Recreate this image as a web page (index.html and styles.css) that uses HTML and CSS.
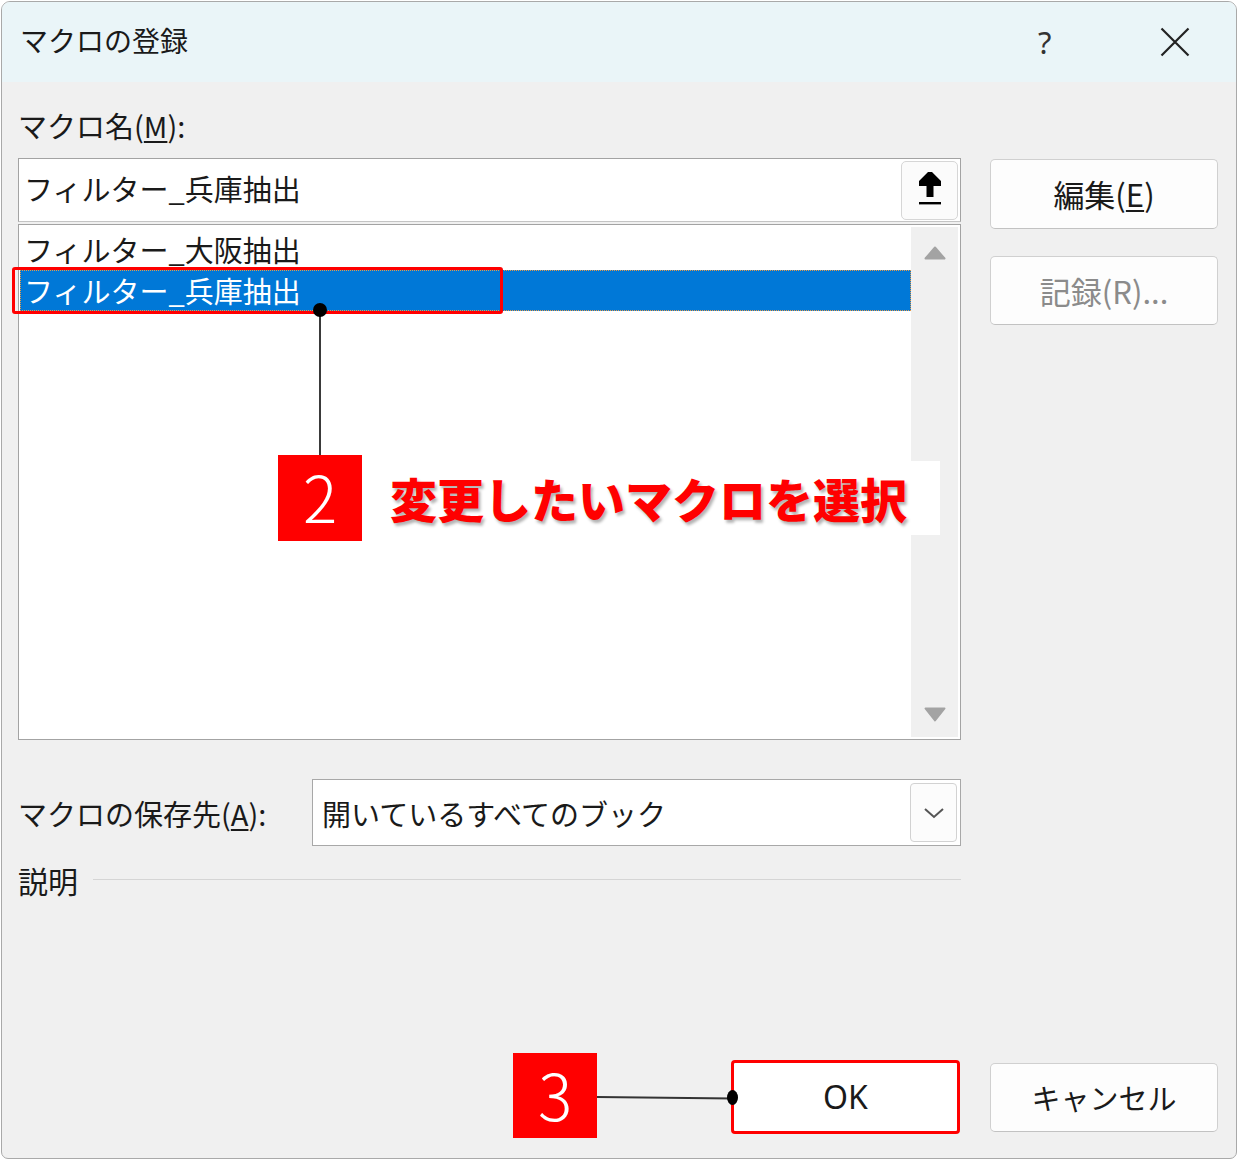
FILE: index.html
```html
<!DOCTYPE html>
<html lang="ja">
<head>
<meta charset="utf-8">
<title>マクロの登録</title>
<link rel="stylesheet" href="styles.css">
</head>
<body>
<div class="dialog">
  <div class="titlebar">
    <span class="title">マクロの登録</span>
    <span class="help">?</span>
    <svg class="close" width="30" height="30" viewBox="0 0 30 30"><path d="M1.5 1.5 L28.5 28.5 M28.5 1.5 L1.5 28.5" stroke="#222" stroke-width="2.2" fill="none"/></svg>
  </div>
  <div class="main">
    <div class="label name-label">マクロ名(<u>M</u>):</div>
    <div class="upper">
      <div class="leftcol">
        <div class="textbox">
          <span class="tb-text">フィルター_兵庫抽出</span>
          <span class="tb-btn">
            <svg width="24" height="34" viewBox="0 0 24 34"><path d="M10 1 H14 L23 10 V15 H15.5 V26 H8.5 V15 H1 V10 Z" fill="#000"/><rect x="1" y="31" width="22" height="2.4" fill="#000"/></svg>
          </span>
        </div>
        <div class="listbox">
          <div class="items">
            <div class="item">フィルター_大阪抽出</div>
            <div class="item selected">フィルター_兵庫抽出</div>
          </div>
          <div class="scrollbar">
            <svg width="22" height="14" viewBox="0 0 22 14"><path d="M11 1.5 L20.5 12.5 H1.5 Z" fill="#a3a3a3" stroke="#a3a3a3" stroke-width="2" stroke-linejoin="round"/></svg>
            <svg width="22" height="15" viewBox="0 0 22 15"><path d="M1.5 1.5 H20.5 L11 13.5 Z" fill="#a3a3a3" stroke="#a3a3a3" stroke-width="2" stroke-linejoin="round"/></svg>
          </div>
        </div>
      </div>
      <div class="rightcol">
        <div class="btn btn-edit">編集(<u>E</u>)</div>
        <div class="btn btn-record">記録(R)...</div>
      </div>
    </div>
    <div class="store-row">
      <div class="label store-label">マクロの保存先(<u>A</u>):</div>
      <div class="combo">
        <span class="combo-text">開いているすべてのブック</span>
        <span class="combo-btn">
          <svg width="22" height="12" viewBox="0 0 22 12"><path d="M2 2 L11 10 L20 2" stroke="#555" stroke-width="2" fill="none"/></svg>
        </span>
      </div>
    </div>
    <div class="desc-row">
      <span class="label desc-label">説明</span>
      <span class="rule"></span>
    </div>
    <div class="buttons">
      <div class="btn btn-ok">OK</div>
      <div class="btn btn-cancel">キャンセル</div>
    </div>
  </div>

  <div class="hl-box"></div>
  <div class="line2"></div>
  <div class="dot dot2"></div>
  <div class="callout2">
    <div class="num">2</div>
    <div class="callout-label">変更したいマクロを選択</div>
  </div>
  <div class="num num3">3</div>
  <div class="line3"></div>
  <div class="dot dot3"></div>
</div>
</body>
</html>
```
FILE: styles.css
```css
body {
  margin: 0;
  background: #ffffff;
  font-family: "Noto Sans CJK JP", "Noto Sans", sans-serif;
  color: #1a1a1a;
}

.dialog {
  position: relative;
  box-sizing: border-box;
  width: 1236px;
  height: 1158px;
  margin: 1px 0 0 1px;
  border: 1px solid #a9a9a9;
  border-radius: 9px 9px 7px 7px;
  background: #f0f0f0;
  overflow: hidden;
}

.titlebar {
  height: 80px;
  background: #eaf5f8;
  display: flex;
  align-items: center;
  padding: 0 46px 0 18px;
}

.title {
  font-size: 28px;
  line-height: 36px;
  margin-top: -4px;
}

.help {
  margin-left: auto;
  width: 16px;
  font-family: "Noto Sans", sans-serif;
  font-size: 31px;
  line-height: 36px;
  color: #333;
  margin-top: -1px;
}

.close {
  margin-left: 106px;
  display: block;
  margin-top: -1px;
}

.main {
  padding: 0 18px 0 16px;
}

.label {
  font-size: 29px;
  line-height: 36px;
}

.label u {
  text-decoration-thickness: 1.5px;
  text-underline-offset: 3px;
}

.name-label {
  margin-top: 25px;
  height: 38px;
}

.upper {
  margin-top: 13px;
  display: flex;
  gap: 29px;
}

.leftcol {
  width: 943px;
  display: flex;
  flex-direction: column;
}

.textbox {
  box-sizing: border-box;
  height: 64px;
  background: #ffffff;
  border: 1px solid #a3a3a3;
  border-bottom-color: #c4c4c4;
  display: flex;
  align-items: center;
  padding: 0 2px 0 5px;
}

.tb-text {
  font-size: 29px;
  line-height: 40px;
  margin-top: -4px;
}

.tb-btn {
  margin-left: auto;
  box-sizing: border-box;
  width: 57px;
  height: 59px;
  border: 1px solid #d6d6d6;
  border-radius: 5px;
  background: #fbfbfb;
  display: flex;
  align-items: center;
  justify-content: center;
}

.tb-btn svg {
  margin-top: -5px;
}

.listbox {
  box-sizing: border-box;
  height: 516px;
  margin-top: 2px;
  background: #ffffff;
  border: 1px solid #a3a3a3;
  display: flex;
  padding: 2px 2px 2px 1px;
}

.items {
  flex: 1;
  padding-top: 2px;
}

.item {
  height: 41px;
  line-height: 41px;
  font-size: 29px;
  padding-left: 4px;
  white-space: nowrap;
}

.item.selected {
  background: #0078d7;
  color: #ffffff;
  outline: 1px dotted #e49a4a;
  outline-offset: -1px;
}

.scrollbar {
  width: 47px;
  background: #f0f0f0;
  display: flex;
  flex-direction: column;
  justify-content: space-between;
  align-items: center;
  padding: 19px 0 15px;
  box-sizing: border-box;
}

.scrollbar svg {
  display: block;
}

.rightcol {
  width: 228px;
  display: flex;
  flex-direction: column;
}

.btn {
  box-sizing: border-box;
  border: 1px solid #d0d0d0;
  border-bottom-color: #c2c2c2;
  border-radius: 5px;
  background: #fdfdfd;
  display: flex;
  align-items: center;
  justify-content: center;
  font-size: 30px;
  line-height: 40px;
}

.btn u {
  text-decoration-thickness: 1.5px;
  text-underline-offset: 3px;
}

.btn-edit {
  margin-top: 1px;
  height: 70px;
  font-size: 31px;
}

.btn-record {
  margin-top: 27px;
  height: 69px;
  color: #8b8b8b;
  font-size: 31px;
}

.store-row {
  margin-top: 39px;
  height: 67px;
  display: flex;
  align-items: center;
}

.store-label {
  width: 294px;
}

.combo {
  box-sizing: border-box;
  width: 649px;
  height: 67px;
  background: #ffffff;
  border: 1px solid #a8a8a8;
  display: flex;
  align-items: center;
  padding: 0 3px 0 9px;
}

.combo-text {
  font-size: 29px;
  line-height: 40px;
}

.combo-btn {
  margin-left: auto;
  box-sizing: border-box;
  width: 47px;
  height: 59px;
  border: 1px solid #d2d2d2;
  border-radius: 4px;
  background: #fcfcfc;
  display: flex;
  align-items: center;
  justify-content: center;
}

.desc-row {
  width: 943px;
  margin-top: 16px;
  height: 36px;
  display: flex;
  align-items: center;
}

.desc-label {
  font-size: 30px;
}

.rule {
  flex: 1;
  height: 1px;
  background: #d5d5d5;
  margin-left: 15px;
  margin-top: -2px;
}

.buttons {
  margin-top: 162px;
  display: flex;
  justify-content: flex-end;
  align-items: center;
  gap: 30px;
}

.btn-ok {
  width: 229px;
  height: 74px;
  border: 3px solid #ff0000;
  border-radius: 4px;
  background: #ffffff;
  font-family: "Noto Sans", sans-serif;
  font-size: 32px;
}

.btn-cancel {
  width: 228px;
  height: 69px;
  font-size: 29px;
}

/* annotations */
.hl-box {
  position: absolute;
  left: 10px;
  top: 265px;
  width: 491px;
  height: 47px;
  box-sizing: border-box;
  border: 3px solid #ff0000;
  border-radius: 3px;
}

.dot {
  position: absolute;
  background: #000;
  border-radius: 50%;
}

.dot2 {
  left: 311px;
  top: 301px;
  width: 14px;
  height: 14px;
}

.line2 {
  position: absolute;
  left: 317px;
  top: 308px;
  width: 2px;
  height: 146px;
  background: #3a3a3a;
}

.callout2 {
  position: absolute;
  left: 276px;
  top: 453px;
  display: flex;
  align-items: center;
}

.num {
  width: 84px;
  height: 86px;
  background: #ff0000;
  color: #ffffff;
  font-family: "Noto Sans CJK JP", sans-serif;
  font-size: 64px;
  font-weight: 300;
  line-height: 80px;
  text-align: center;
}

.callout-label {
  box-sizing: border-box;
  width: 578px;
  height: 74px;
  background: #ffffff;
  display: flex;
  align-items: center;
  padding-left: 28px;
  color: #ff0000;
  font-size: 47px;
  font-weight: 900;
  line-height: 60px;
  white-space: nowrap;
  text-shadow: 2px 3px 3px rgba(0, 0, 0, 0.3);
}

.num3 {
  position: absolute;
  left: 511px;
  top: 1051px;
  height: 85px;
  line-height: 80px;
}

.line3 {
  position: absolute;
  left: 595px;
  top: 1094px;
  width: 136px;
  height: 1.5px;
  background: #333;
  transform: rotate(0.6deg);
  transform-origin: left center;
}

.dot3 {
  left: 725px;
  top: 1088px;
  width: 11px;
  height: 15px;
}
```
